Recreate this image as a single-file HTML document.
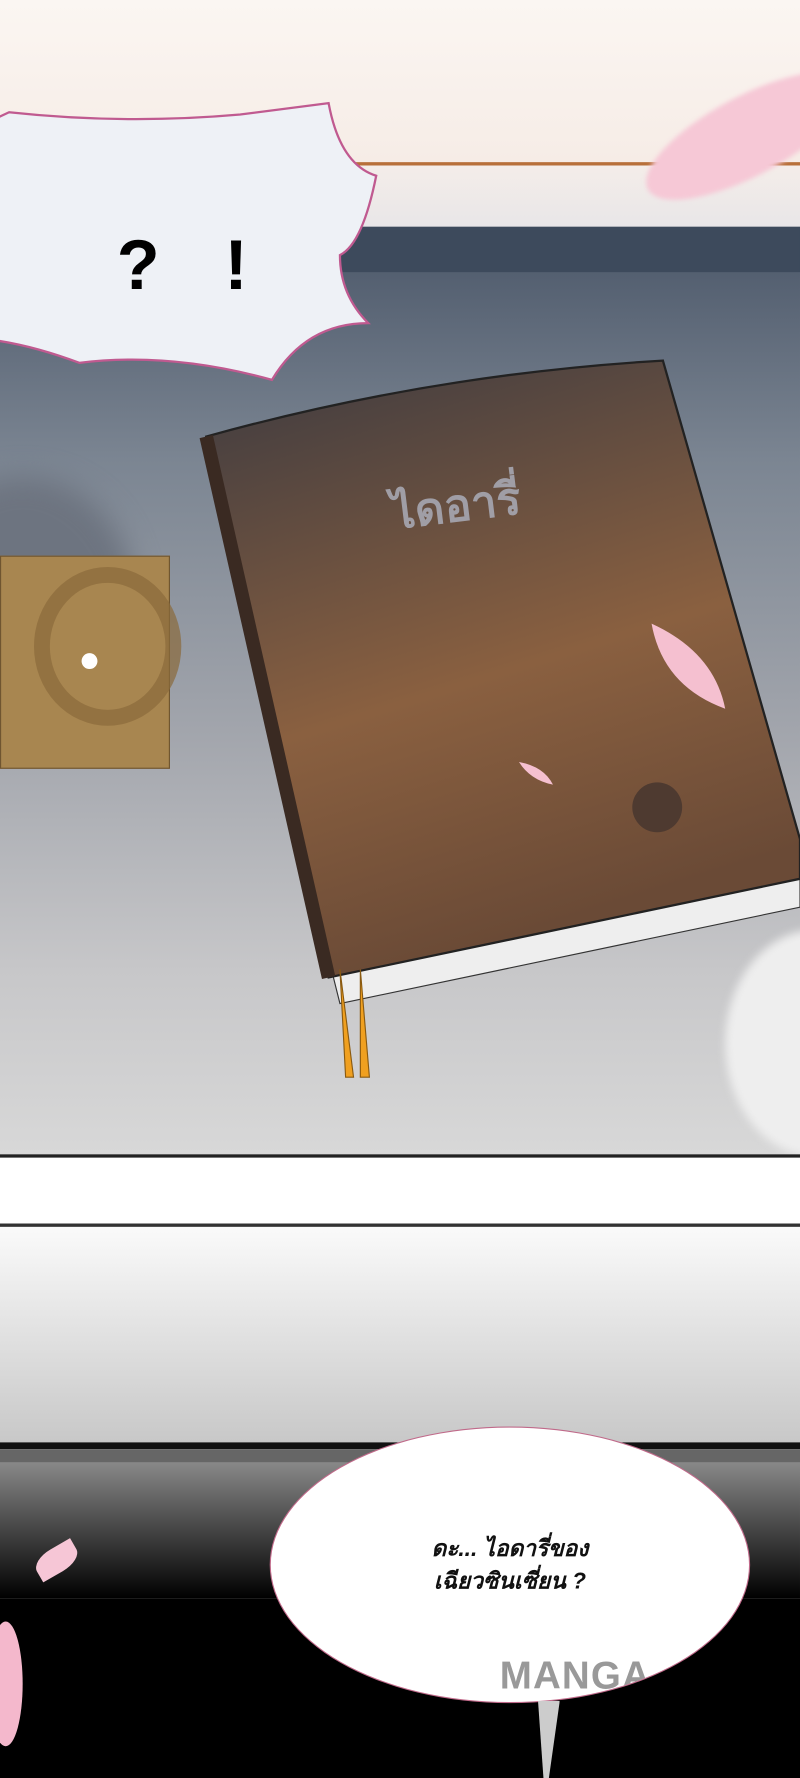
<!DOCTYPE html>
<html><head><meta charset="utf-8"><style>
html,body{margin:0;padding:0;width:800px;height:1778px;overflow:hidden;background:#fff}
#s{position:absolute;left:0;top:0;width:706px;height:1568px;transform:scale(1.13314,1.13393);transform-origin:0 0;overflow:hidden}
.a{position:absolute}
</style></head><body><div id="s">
<div class="a" style="left:0;top:0;width:706px;height:145px;background:linear-gradient(#fbf6f2,#f6ece6)"></div>
<div class="a" style="left:0;top:143px;width:706px;height:3px;background:#b8703a"></div>
<div class="a" style="left:0;top:146px;width:706px;height:56px;background:linear-gradient(#f4ede9,#e8e6e8)"></div>
<div class="a" style="left:0;top:200px;width:706px;height:820px;background:linear-gradient(180deg,#4a5668 0%,#7b8592 25%,#a3a6ad 55%,#c7c7c9 80%,#d8d8d8 100%)"></div>
<div class="a" style="left:0;top:200px;width:706px;height:40px;background:#3d4a5c"></div>
<div class="a" style="left:-80px;top:420px;width:200px;height:220px;border-radius:50%;background:#6d7480;filter:blur(12px)"></div>
<div class="a" style="left:640px;top:820px;width:160px;height:200px;border-radius:50%;background:#eee;filter:blur(4px)"></div>
<div class="a" style="left:0;top:490px;width:148px;height:186px;background:#a88650;border:1px solid #6f5530"></div>
<div class="a" style="left:30px;top:500px;width:130px;height:140px;border-radius:50%;border:14px solid #8a6a3a;box-sizing:border-box;opacity:.7"></div>
<div class="a" style="left:72px;top:576px;width:14px;height:14px;border-radius:50%;background:#fff"></div>
<svg class="a" style="left:0;top:0" width="706" height="1020">
<defs><linearGradient id="bk" x1="0" y1="0" x2="0.3" y2="1"><stop offset="0" stop-color="#3c3a40"/><stop offset="0.6" stop-color="#8a6040"/><stop offset="1" stop-color="#6a4a36"/></linearGradient></defs>
<polygon points="290,845 706,760 706,800 300,885" fill="#eee" stroke="#333"/>
<path d="M182,385 Q380,330 585,318 L706,740 L706,775 L290,862 Z" fill="url(#bk)" stroke="#222" stroke-width="2"/>
<path d="M182,385 L290,862" stroke="#3a2a22" stroke-width="12"/>
<path d="M300,855 L305,950 L312,950 Z M318,855 L318,950 L326,950 Z" fill="#f0a020" stroke="#8a5a10"/>
<circle cx="580" cy="712" r="22" fill="#4e3a30"/>
<path d="M575,550 Q630,575 640,625 Q585,605 575,550Z" fill="#f5c0d0"/>
<path d="M458,672 Q480,676 488,692 Q468,688 458,672Z" fill="#f5c0d0"/>
<text x="345" y="460" font-family="sans-serif" font-weight="bold" font-size="40" fill="#a09ea6" transform="rotate(-7 400 440)">ไดอารี่</text>
</svg>
<div class="a" style="left:0;top:1018px;width:706px;height:3px;background:#222"></div>
<div class="a" style="left:0;top:1021px;width:706px;height:58px;background:#fff"></div>
<div class="a" style="left:0;top:1079px;width:706px;height:3px;background:#333"></div>
<div class="a" style="left:0;top:1082px;width:706px;height:190px;background:linear-gradient(#fafafa,#c8c8c8)"></div>
<div class="a" style="left:0;top:1272px;width:706px;height:6px;background:#111"></div>
<div class="a" style="left:0;top:1278px;width:706px;height:12px;background:#666"></div>
<div class="a" style="left:0;top:1290px;width:706px;height:120px;background:linear-gradient(#888,#000)"></div>
<div class="a" style="left:0;top:1410px;width:706px;height:158px;background:#000"></div>
<div class="a" style="left:30px;top:1365px;width:40px;height:22px;background:#f6c6d6;border-radius:50% 0 50% 0;transform:rotate(-30deg)"></div>
<div class="a" style="left:-10px;top:1430px;width:30px;height:110px;background:#f4b8cc;border-radius:50%"></div>
<div class="a" style="left:560px;top:85px;width:200px;height:70px;background:#f6c8d6;border-radius:50%;transform:rotate(-28deg);filter:blur(2px)"></div>
<div class="a" style="left:238px;top:1258px;width:424px;height:244px;border-radius:50%;background:#fff;border:1px solid #c06a8a;box-sizing:border-box;overflow:hidden">
<div class="a" style="left:202px;top:200px;font-family:'Liberation Sans',sans-serif;font-weight:bold;font-size:34px;color:#999;letter-spacing:1px">MANGA</div>
</div>
<div class="a" style="left:470px;top:1500px;width:24px;height:68px;background:#ccc;clip-path:polygon(20% 0,100% 0,60% 100%,40% 100%)"></div>
<div class="a" style="left:330px;top:1352px;width:240px;text-align:center;font-family:sans-serif;font-style:italic;font-weight:bold;font-size:20px;line-height:29px;color:#111">ดะ... ไอดารี่ของ<br>เฉียวซินเซี่ยน ?</div>
<svg class="a" style="left:0;top:85px" width="340" height="260">
<path d="M8,14 Q110,25 212,16 L290,6 Q300,60 332,70 Q320,130 300,140 Q300,175 325,200 Q270,200 240,250 Q150,225 70,235 Q30,220 -5,215 L-5,20 Z" fill="#eef1f6" stroke="#c05a90" stroke-width="2"/>
<text x="103" y="170" font-family="'Liberation Sans',sans-serif" font-weight="bold" font-size="62" fill="#000">?</text>
<text x="198" y="170" font-family="'Liberation Sans',sans-serif" font-weight="bold" font-size="62" fill="#000">!</text>
</svg>
</div></body></html>
